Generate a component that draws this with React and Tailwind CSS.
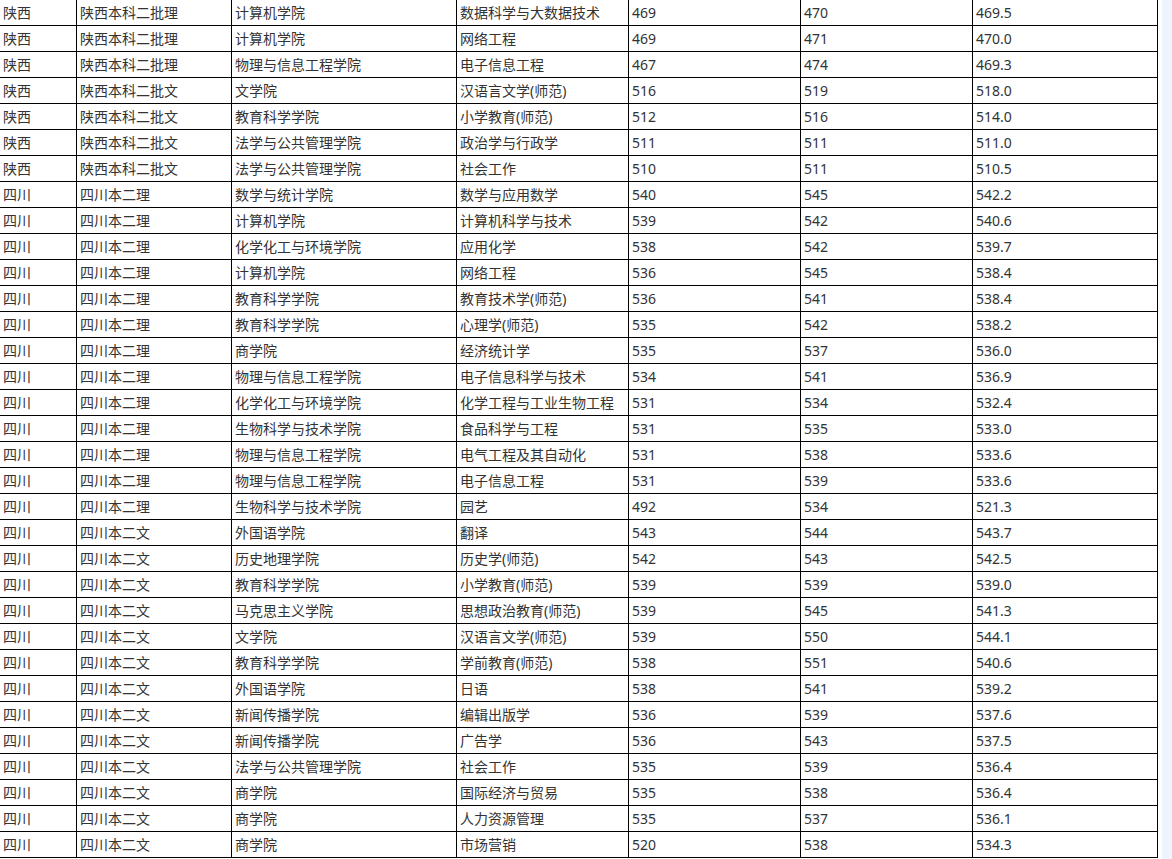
const rows = [
  ['陕西', '陕西本科二批理', '计算机学院', '数据科学与大数据技术', '469', '470', '469.5'],
  ['陕西', '陕西本科二批理', '计算机学院', '网络工程', '469', '471', '470.0'],
  ['陕西', '陕西本科二批理', '物理与信息工程学院', '电子信息工程', '467', '474', '469.3'],
  ['陕西', '陕西本科二批文', '文学院', '汉语言文学(师范)', '516', '519', '518.0'],
  ['陕西', '陕西本科二批文', '教育科学学院', '小学教育(师范)', '512', '516', '514.0'],
  ['陕西', '陕西本科二批文', '法学与公共管理学院', '政治学与行政学', '511', '511', '511.0'],
  ['陕西', '陕西本科二批文', '法学与公共管理学院', '社会工作', '510', '511', '510.5'],
  ['四川', '四川本二理', '数学与统计学院', '数学与应用数学', '540', '545', '542.2'],
  ['四川', '四川本二理', '计算机学院', '计算机科学与技术', '539', '542', '540.6'],
  ['四川', '四川本二理', '化学化工与环境学院', '应用化学', '538', '542', '539.7'],
  ['四川', '四川本二理', '计算机学院', '网络工程', '536', '545', '538.4'],
  ['四川', '四川本二理', '教育科学学院', '教育技术学(师范)', '536', '541', '538.4'],
  ['四川', '四川本二理', '教育科学学院', '心理学(师范)', '535', '542', '538.2'],
  ['四川', '四川本二理', '商学院', '经济统计学', '535', '537', '536.0'],
  ['四川', '四川本二理', '物理与信息工程学院', '电子信息科学与技术', '534', '541', '536.9'],
  ['四川', '四川本二理', '化学化工与环境学院', '化学工程与工业生物工程', '531', '534', '532.4'],
  ['四川', '四川本二理', '生物科学与技术学院', '食品科学与工程', '531', '535', '533.0'],
  ['四川', '四川本二理', '物理与信息工程学院', '电气工程及其自动化', '531', '538', '533.6'],
  ['四川', '四川本二理', '物理与信息工程学院', '电子信息工程', '531', '539', '533.6'],
  ['四川', '四川本二理', '生物科学与技术学院', '园艺', '492', '534', '521.3'],
  ['四川', '四川本二文', '外国语学院', '翻译', '543', '544', '543.7'],
  ['四川', '四川本二文', '历史地理学院', '历史学(师范)', '542', '543', '542.5'],
  ['四川', '四川本二文', '教育科学学院', '小学教育(师范)', '539', '539', '539.0'],
  ['四川', '四川本二文', '马克思主义学院', '思想政治教育(师范)', '539', '545', '541.3'],
  ['四川', '四川本二文', '文学院', '汉语言文学(师范)', '539', '550', '544.1'],
  ['四川', '四川本二文', '教育科学学院', '学前教育(师范)', '538', '551', '540.6'],
  ['四川', '四川本二文', '外国语学院', '日语', '538', '541', '539.2'],
  ['四川', '四川本二文', '新闻传播学院', '编辑出版学', '536', '539', '537.6'],
  ['四川', '四川本二文', '新闻传播学院', '广告学', '536', '543', '537.5'],
  ['四川', '四川本二文', '法学与公共管理学院', '社会工作', '535', '539', '536.4'],
  ['四川', '四川本二文', '商学院', '国际经济与贸易', '535', '538', '536.4'],
  ['四川', '四川本二文', '商学院', '人力资源管理', '535', '537', '536.1'],
  ['四川', '四川本二文', '商学院', '市场营销', '520', '538', '534.3'],
];

export default function App() {
  return (
    <div
      className="flex h-[859px] w-[1172px] overflow-hidden bg-white text-[14px] text-[#333]"
      style={{ fontFamily: '"Noto Sans", "Noto Sans CJK SC", sans-serif' }}
    >
      {/* score table */}
      <div className="-mt-px -ml-px grid h-fit grid-cols-[77px_155px_225px_172px_172px_172px_185px] border-t border-l border-black">
        {rows.map((row, i) =>
          row.map((cell, j) => (
            <div
              key={`${i}-${j}`}
              className="flex h-[26px] items-center overflow-hidden whitespace-nowrap border-r border-b border-black pt-px pl-[3px] leading-none"
            >
              {cell}
            </div>
          ))
        )}
      </div>

      <div className="w-[4px]" />
      {/* scrollbar track */}
      <div className="h-full flex-1 bg-[#eef4fc]" />
    </div>
  );
}
